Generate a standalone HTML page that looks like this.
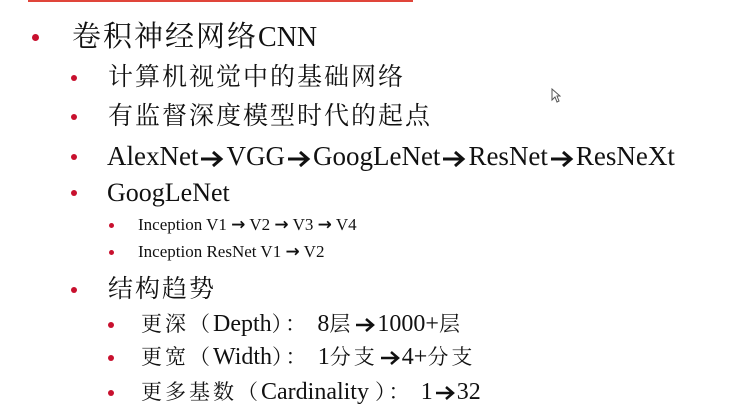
<!DOCTYPE html>
<html><head><meta charset="utf-8"><style>
body{margin:0;width:731px;height:412px;background:#fff;position:relative;overflow:hidden;font-family:"Liberation Serif","Noto Serif CJK SC",serif;color:#111}
.t{position:absolute;white-space:nowrap;line-height:1}
.b{position:absolute;border-radius:50%;background:#c8102e}
.a{display:inline-block;vertical-align:middle;margin:0 2px}
.c{font-size:21px;letter-spacing:3px}
</style></head><body>
<div style="position:absolute;left:28px;top:0;width:385px;height:2px;background:#e0453a"></div>
<div class="b" style="left:32px;top:34px;width:7px;height:7px"></div>
<div class="t" style="left:72px;top:23px;font-size:28px"><span style="font-size:29px;letter-spacing:2px">卷积神经网络</span>CNN</div>
<div class="b" style="left:71px;top:75px;width:6px;height:6px"></div>
<div class="t" style="left:108px;top:65px;font-size:25px;letter-spacing:2px">计算机视觉中的基础网络</div>
<div class="b" style="left:71px;top:114px;width:6px;height:6px"></div>
<div class="t" style="left:108px;top:104px;font-size:25px;letter-spacing:2px">有监督深度模型时代的起点</div>
<div class="b" style="left:71px;top:154px;width:6px;height:6px"></div>
<div class="t" style="left:107px;top:143px;font-size:27px">AlexNet<svg class="a" width="24" height="18" viewBox="0 0 24 18"><path d="M1 9H20M13 2L21 9L13 16" stroke="#111" stroke-width="3" fill="none"/></svg>VGG<svg class="a" width="24" height="18" viewBox="0 0 24 18"><path d="M1 9H20M13 2L21 9L13 16" stroke="#111" stroke-width="3" fill="none"/></svg>GoogLeNet<svg class="a" width="24" height="18" viewBox="0 0 24 18"><path d="M1 9H20M13 2L21 9L13 16" stroke="#111" stroke-width="3" fill="none"/></svg>ResNet<svg class="a" width="24" height="18" viewBox="0 0 24 18"><path d="M1 9H20M13 2L21 9L13 16" stroke="#111" stroke-width="3" fill="none"/></svg>ResNeXt</div>
<div class="b" style="left:71px;top:190px;width:6px;height:6px"></div>
<div class="t" style="left:107px;top:180px;font-size:26px">GoogLeNet</div>
<div class="b" style="left:109px;top:223px;width:5px;height:5px"></div>
<div class="t" style="left:138px;top:216px;font-size:17px">Inception V1 <b style="font-family:'DejaVu Sans'">→</b> V2 <b style="font-family:'DejaVu Sans'">→</b> V3 <b style="font-family:'DejaVu Sans'">→</b> V4</div>
<div class="b" style="left:109px;top:250px;width:5px;height:5px"></div>
<div class="t" style="left:138px;top:243px;font-size:17px">Inception ResNet V1 <b style="font-family:'DejaVu Sans'">→</b> V2</div>
<div class="b" style="left:71px;top:287px;width:6px;height:6px"></div>
<div class="t" style="left:108px;top:277px;font-size:25px;letter-spacing:2px">结构趋势</div>
<div class="b" style="left:108px;top:322px;width:6px;height:6px"></div>
<div class="t" style="left:141px;top:312px;font-size:24px"><span class="c">更深（</span>Depth<span class="c">）： </span>8<span class="c">层</span><svg class="a" width="20" height="16" viewBox="0 0 20 16"><path d="M1 8H17M11 2L18 8L11 14" stroke="#111" stroke-width="2.5" fill="none"/></svg>1000+<span class="c">层</span></div>
<div class="b" style="left:108px;top:355px;width:6px;height:6px"></div>
<div class="t" style="left:141px;top:345px;font-size:24px"><span class="c">更宽（</span>Width<span class="c">）： </span>1<span class="c">分支</span><svg class="a" width="20" height="16" viewBox="0 0 20 16"><path d="M1 8H17M11 2L18 8L11 14" stroke="#111" stroke-width="2.5" fill="none"/></svg>4+<span class="c">分支</span></div>
<div class="b" style="left:108px;top:390px;width:6px;height:6px"></div>
<div class="t" style="left:141px;top:380px;font-size:24px"><span class="c">更多基数（</span>Cardinality <span class="c">）： </span>1<svg class="a" width="20" height="16" viewBox="0 0 20 16"><path d="M1 8H17M11 2L18 8L11 14" stroke="#111" stroke-width="2.5" fill="none"/></svg>32</div>
<svg style="position:absolute;left:551px;top:88px" width="10" height="15" viewBox="0 0 10 15"><path d="M1 1 L1 12 L4 9 L6 14 L8 13 L6 8 L9 8 Z" fill="#fff" stroke="#555" stroke-width="1"/></svg>
</body></html>
